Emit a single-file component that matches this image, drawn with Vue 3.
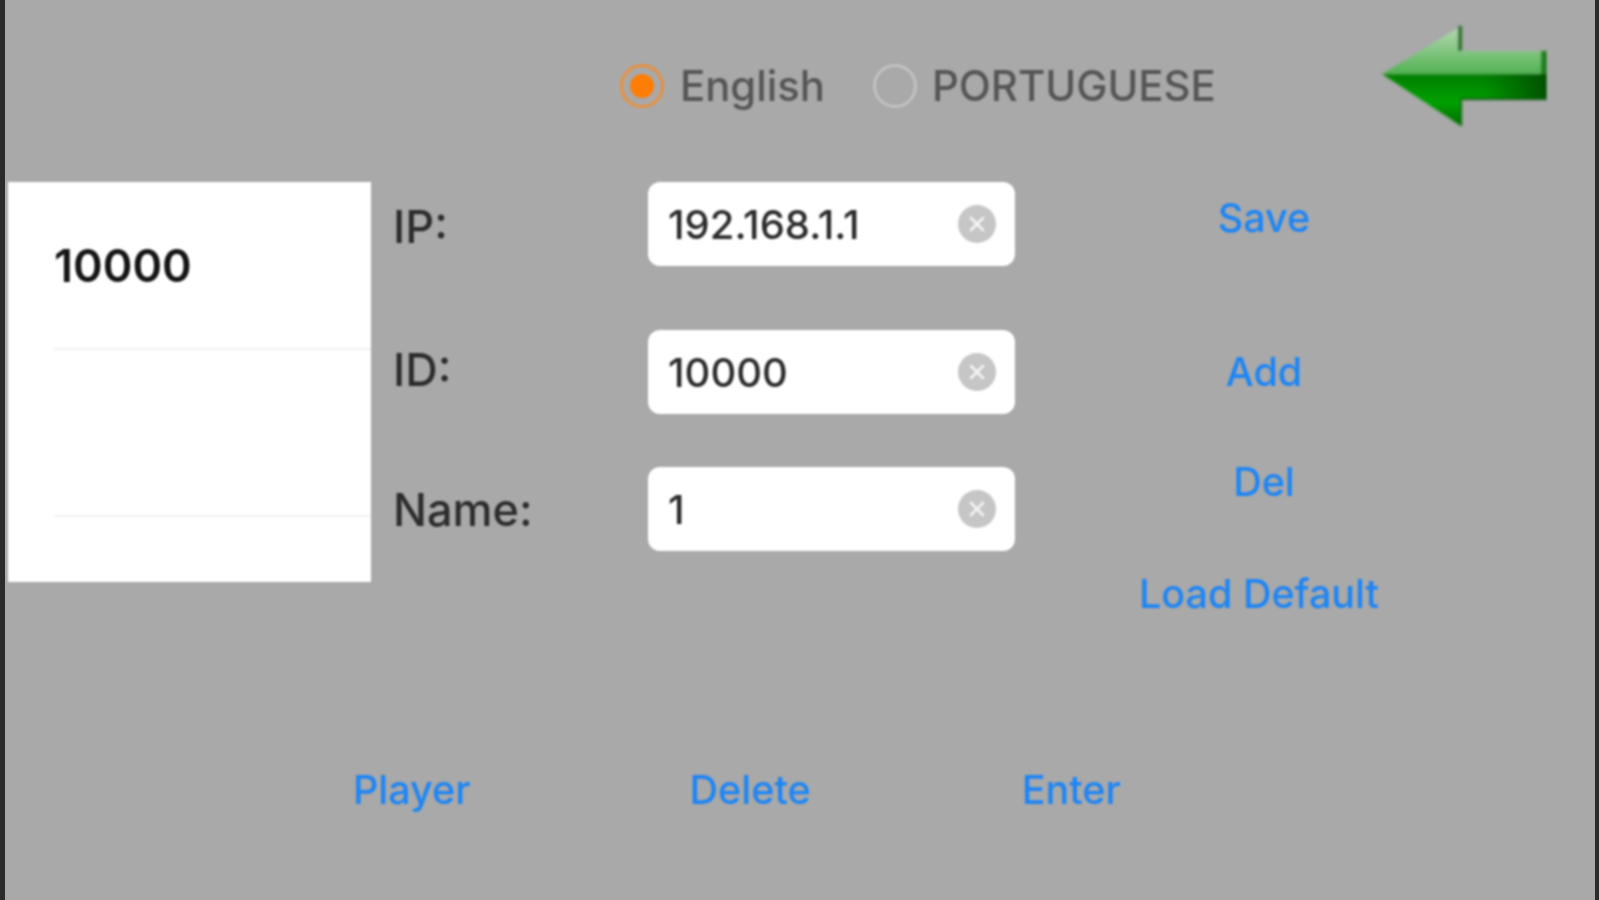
<script setup>
const rows = [
  { label: 'IP:', value: '192.168.1.1' },
  { label: 'ID:', value: '10000' },
  { label: 'Name:', value: '1' }
]
const actions = [
  { text: 'Save', cls: 'save' },
  { text: 'Add', cls: 'add' },
  { text: 'Del', cls: 'del' },
  { text: 'Load Default', cls: 'load' }
]
const bottom = [
  { text: 'Player', cls: 'player' },
  { text: 'Delete', cls: 'delete' },
  { text: 'Enter', cls: 'enter' }
]
</script>

<template>
  <div class="screen">
    <div class="content">
      <div class="top">
        <div class="radio-group">
          <span class="radio on"><span class="dot"></span></span>
          <span class="radio-text">English</span>
          <span class="radio off"></span>
          <span class="radio-text">PORTUGUESE</span>
        </div>
        <svg class="arrow" width="167" height="103" viewBox="0 0 167 103">
          <defs>
            <linearGradient id="up" x1="0" y1="0" x2="0" y2="1">
              <stop offset="0" stop-color="#b8dab4" />
              <stop offset="1" stop-color="#52b252" />
            </linearGradient>
            <linearGradient id="down" x1="0" y1="0" x2="0" y2="1">
              <stop offset="0" stop-color="#057f05" />
              <stop offset="0.55" stop-color="#04a004" />
              <stop offset="1" stop-color="#016a01" />
            </linearGradient>
            <linearGradient id="fade" x1="0" y1="0" x2="1" y2="0">
              <stop offset="0" stop-color="#005a00" stop-opacity="0" />
              <stop offset="1" stop-color="#005000" />
            </linearGradient>
            <filter id="soft" x="-5%" y="-5%" width="110%" height="110%">
              <feGaussianBlur stdDeviation="0.8" />
            </filter>
          </defs>
          <g filter="url(#soft)">
            <path d="M2 50 L81 2 L81 27 L167 27 L167 50 Z" fill="url(#up)" />
            <path d="M2 50 L167 50 L167 76 L81 76 L81 102 Z" fill="url(#down)" />
            <rect x="102" y="50" width="65" height="26" fill="url(#fade)" />
            <rect x="161" y="27" width="6" height="23" fill="#1f7f1f" />
            <rect x="78" y="2" width="4" height="25" fill="#2a6f2a" />
            <rect x="81" y="74" width="86" height="2" fill="#0a5a0a" />
            <path d="M81 76 L81 102" stroke="#0a6a0a" stroke-width="2" fill="none" />
          </g>
        </svg>
      </div>

      <div class="main">
        <div class="list">
          <div class="cell first"><span class="cell-text">10000</span></div>
          <div class="cell"></div>
        </div>
        <div class="form">
          <div v-for="r in rows" :key="r.label" class="row">
            <span class="label">{{ r.label }}</span>
            <div class="field">
              <span class="value">{{ r.value }}</span>
              <svg class="clear" width="38" height="38" viewBox="0 0 38 38">
                <circle cx="19" cy="19" r="19" fill="#c6c6c6" />
                <path d="M13 13 L25 25 M25 13 L13 25" stroke="#f4f4f4" stroke-width="2.6" stroke-linecap="round" />
              </svg>
            </div>
          </div>
        </div>
        <div class="actions">
          <span v-for="a in actions" :key="a.text" class="link" :class="a.cls">{{ a.text }}</span>
        </div>
      </div>

      <div class="bottom">
        <span v-for="b in bottom" :key="b.text" class="link" :class="b.cls">{{ b.text }}</span>
      </div>
    </div>
  </div>
</template>

<style scoped>
.screen {
  box-sizing: border-box;
  width: 1599px;
  height: 900px;
  overflow: hidden;
  background: #a9a9a9;
  border-left: 5px solid #2b2b2b;
  border-right: 4px solid #2b2b2b;
  font-family: Inter, "Liberation Sans", sans-serif;
}
.content {
  display: flex;
  flex-direction: column;
  height: 100%;
  filter: blur(0.8px);
}
.top {
  display: flex;
  align-items: flex-start;
  height: 182px;
  padding-left: 615px;
}
.radio-group {
  display: flex;
  align-items: center;
  height: 44px;
  margin-top: 64px;
  width: 760px;
}
.radio {
  box-sizing: border-box;
  width: 44px;
  height: 44px;
  border-radius: 50%;
  display: flex;
  align-items: center;
  justify-content: center;
  flex: none;
}
.radio.on { border: 3px solid #e8913f; }
.radio.off { border: 3px solid #c2c2c2; margin-left: 48px; }
.dot {
  width: 24px;
  height: 24px;
  border-radius: 50%;
  background: #ff7d06;
}
.radio-text {
  margin-left: 16px;
  font-size: 41.8px;
  font-weight: 500;
  color: #555;
  white-space: nowrap;
}
.radio.off + .radio-text { margin-left: 15px; }
.arrow { margin-top: 24px; flex: none; }
.main {
  display: flex;
  align-items: flex-start;
  margin-left: 3px;
}
.list {
  width: 363px;
  height: 400px;
  background: #fff;
  flex: none;
  padding-left: 46px;
  box-sizing: border-box;
}
.cell {
  height: 167px;
  border-bottom: 2px solid #f1f1f1;
  box-sizing: border-box;
}
.cell.first { height: 168px; padding-top: 57px; }
.cell-text {
  font-size: 45px;
  line-height: 54px;
  font-weight: 600;
  color: #151515;
  display: block;
}
.form {
  margin-left: 22px;
  width: 622px;
  flex: none;
}
.row {
  display: flex;
  align-items: center;
  height: 84px;
  margin-bottom: 64px;
}
.row:nth-child(2) { margin-bottom: 53px; }
.row:nth-child(3) { margin-bottom: 0; }
.label {
  width: 255px;
  flex: none;
  font-size: 45px;
  font-weight: 500;
  color: #2c2c2c;
}
.row:nth-child(1) .label { padding-top: 4px; }
.row:nth-child(2) .label { padding-bottom: 6px; }
.field {
  box-sizing: border-box;
  width: 367px;
  height: 84px;
  background: #fff;
  border-radius: 12px;
  display: flex;
  align-items: center;
  justify-content: space-between;
  padding: 0 19px 0 20px;
}
.value {
  font-size: 40px;
  font-weight: 500;
  color: #2b2b2b;
}
.clear { flex: none; }
.link {
  font-size: 39.5px;
  font-weight: 500;
  color: #1d85f5;
  white-space: nowrap;
}
.actions {
  flex: 1;
  display: flex;
  flex-direction: column;
  align-items: center;
  padding-right: 82px;
}
.actions .link { display: block; line-height: 48px; }
.save { margin-top: 12px; }
.add { margin-top: 106px; }
.del { margin-top: 62px; }
.load { margin-top: 64px; margin-left: -10px; }
.bottom {
  display: flex;
  margin-top: 148px;
  padding-left: 348px;
}
.bottom .link { line-height: 48px; }
.delete { margin-left: 219px; }
.enter { margin-left: 211px; }
</style>
